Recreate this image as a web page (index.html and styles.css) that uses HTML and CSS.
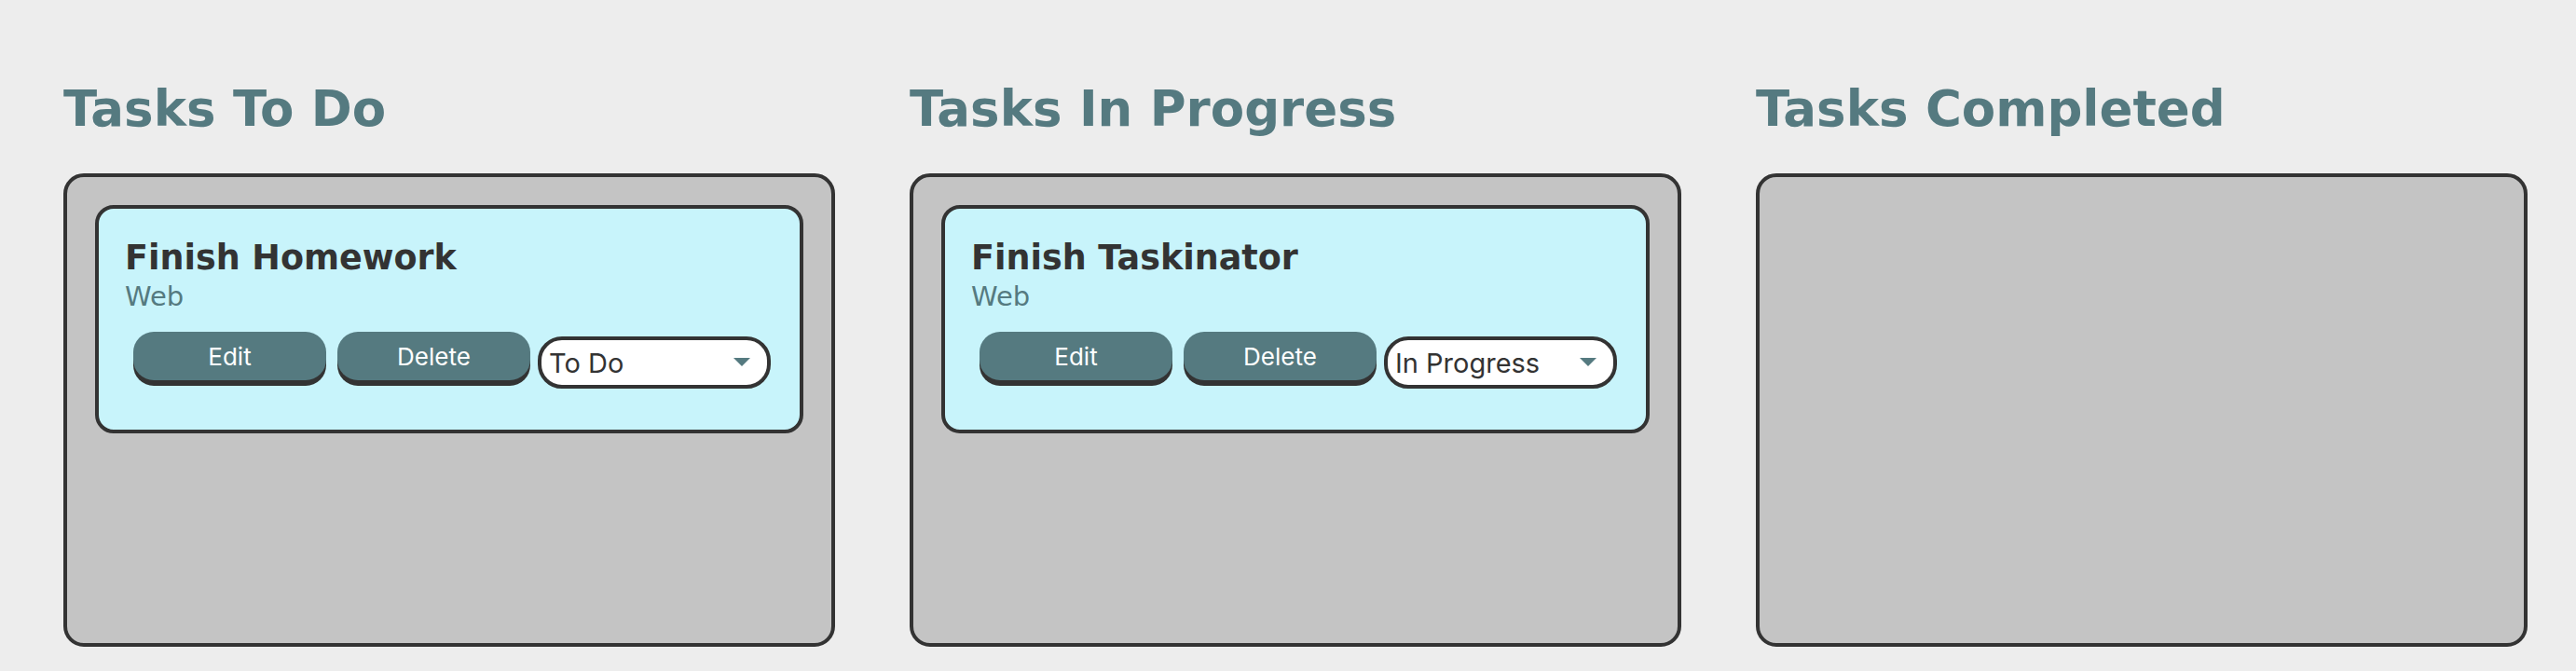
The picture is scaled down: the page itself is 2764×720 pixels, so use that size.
FILE: index.html
```html
<!DOCTYPE html>
<html lang="en">
<head>
<meta charset="utf-8">
<title>Taskinator</title>
<link rel="stylesheet" href="styles.css">
</head>
<body>
<main class="board">
  <section class="column">
    <h2 class="column-title">Tasks To Do</h2>
    <ul class="task-list">
      <li class="task">
        <div class="task-info">
          <h3 class="task-name">Finish Homework</h3>
          <span class="task-type">Web</span>
        </div>
        <div class="task-actions">
          <button class="btn edit-btn">Edit</button>
          <button class="btn delete-btn">Delete</button>
          <div class="select-wrap">
            <select class="select-status">
              <option selected>To Do</option>
              <option>In Progress</option>
              <option>Completed</option>
            </select>
            <svg class="select-arrow" width="18" height="9" viewBox="0 0 18 9"><path d="M0 0H18L9 9Z" fill="#557a80"/></svg>
          </div>
        </div>
      </li>
    </ul>
  </section>
  <section class="column">
    <h2 class="column-title">Tasks In Progress</h2>
    <ul class="task-list">
      <li class="task">
        <div class="task-info">
          <h3 class="task-name">Finish Taskinator</h3>
          <span class="task-type">Web</span>
        </div>
        <div class="task-actions">
          <button class="btn edit-btn">Edit</button>
          <button class="btn delete-btn">Delete</button>
          <div class="select-wrap">
            <select class="select-status">
              <option>To Do</option>
              <option selected>In Progress</option>
              <option>Completed</option>
            </select>
            <svg class="select-arrow" width="18" height="9" viewBox="0 0 18 9"><path d="M0 0H18L9 9Z" fill="#557a80"/></svg>
          </div>
        </div>
      </li>
    </ul>
  </section>
  <section class="column">
    <h2 class="column-title">Tasks Completed</h2>
    <ul class="task-list"></ul>
  </section>
</main>
</body>
</html>
```
FILE: styles.css
```css
* { box-sizing: border-box; }

body {
  margin: 0;
  background: #ededed;
  font-family: "DejaVu Sans", Verdana, sans-serif;
  color: #333;
}

.board {
  display: flex;
  gap: 80px;
  padding: 87px 68px 0;
}

.column {
  width: 828px;
  flex: none;
}

.column-title {
  margin: 0 0 39px;
  font-family: "DejaVu Sans", Verdana, sans-serif;
  font-weight: bold;
  font-size: 53px;
  line-height: 60px;
  color: #557a80;
}

.task-list {
  list-style: none;
  margin: 0;
  height: 508px;
  padding: 30px;
  background: #c4c4c4;
  border: 4px solid #333;
  border-radius: 22px;
}

.task {
  background: #c8f4fb;
  border: 4px solid #333;
  border-radius: 20px;
  padding: 32px 28px 44px;
}

.task-name {
  margin: 0;
  font-family: "DejaVu Sans", Verdana, sans-serif;
  font-weight: bold;
  font-size: 36.5px;
  line-height: 42px;
  color: #333;
}

.task-type {
  display: block;
  margin-top: 2px;
  font-size: 29px;
  line-height: 36px;
  color: #557a80;
}

.task-actions {
  display: flex;
  align-items: flex-start;
  margin-top: 20px;
  padding-left: 9px;
}

.btn {
  width: 207px;
  height: 52px;
  margin: 0 12px 0 0;
  padding: 0;
  border: none;
  border-radius: 22px;
  background: #557a80;
  color: #fff;
  font-family: Inter, "Noto Sans", sans-serif;
  font-size: 26px;
  box-shadow: 0 6px 0 0 #333;
}

.delete-btn {
  margin-right: 8px;
}

.select-wrap {
  position: relative;
  margin-top: 5px;
}

.select-status {
  appearance: none;
  -webkit-appearance: none;
  display: block;
  width: 250px;
  height: 56px;
  margin: 0;
  padding: 0 40px 0 8px;
  background: #fff;
  border: 4px solid #333;
  border-radius: 26px;
  font-family: Inter, "Noto Sans", sans-serif;
  font-size: 29px;
  color: #333;
}

.select-arrow {
  position: absolute;
  right: 22px;
  top: 23px;
  pointer-events: none;
}
```
